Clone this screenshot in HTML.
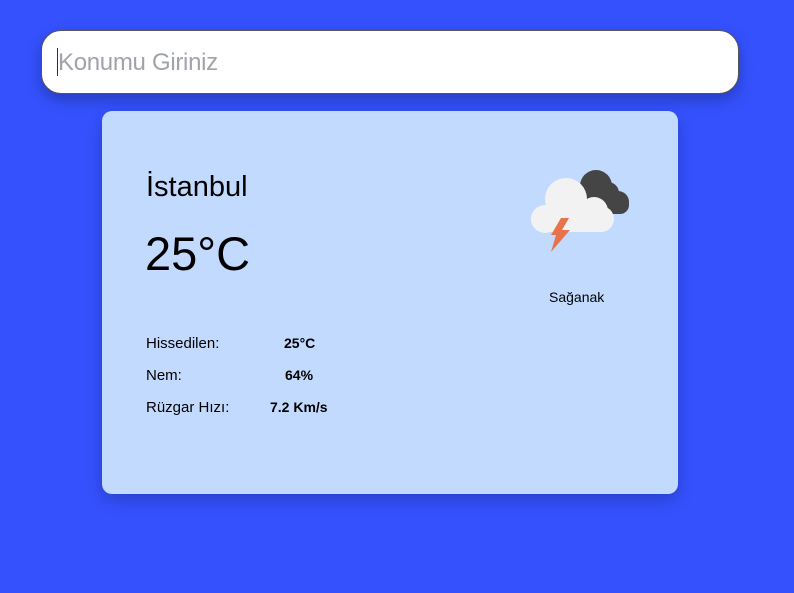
<!DOCTYPE html>
<html><head><style>
body{margin:0;width:794px;height:593px;background:#3451fd;font-family:"Liberation Sans","DejaVu Sans",sans-serif;position:relative;overflow:hidden}
.inp{position:absolute;left:41px;top:30px;width:696px;height:62px;background:#fff;border:1px solid #555;border-radius:20px;box-shadow:0 6px 14px rgba(0,0,0,.25)}
.inp span{position:absolute;left:16px;top:18px;font-size:24px;color:#a0a3aa;letter-spacing:-0.3px}
.inp i{position:absolute;left:15px;top:17px;width:1px;height:28px;background:#333}
.card{position:absolute;left:102px;top:111px;width:576px;height:383px;background:#c2dafd;border-radius:10px;box-shadow:0 6px 16px rgba(0,0,0,.2)}
.t{position:absolute;color:#000}
</style></head><body>
<div class="inp"><i></i><span>Konumu Giriniz</span></div>
<div class="card">
<div class="t" style="left:44px;top:60px;font-size:29px">İstanbul</div>
<div class="t" style="left:43px;top:115px;font-size:47px">25°C</div>
<div class="t" style="left:447px;top:178px;font-size:14px">Sağanak</div>
<div class="t" style="left:44px;top:224px;font-size:15px">Hissedilen:</div>
<div class="t" style="left:182px;top:224px;font-size:14px;font-weight:bold">25°C</div>
<div class="t" style="left:44px;top:256px;font-size:15px">Nem:</div>
<div class="t" style="left:183px;top:256px;font-size:14px;font-weight:bold">64%</div>
<div class="t" style="left:44px;top:288px;font-size:15px">Rüzgar Hızı:</div>
<div class="t" style="left:168px;top:288px;font-size:14px;font-weight:bold">7.2 Km/s</div>
</div>
<svg style="position:absolute;left:0;top:0" width="794" height="593">
<g fill="#454545">
<circle cx="596" cy="186" r="16"/><circle cx="608" cy="193" r="11"/><circle cx="618" cy="202" r="11"/>
<rect x="580" y="195" width="49" height="19" rx="9"/>
</g>
<g fill="#f2f2f2">
<circle cx="566" cy="199" r="21"/><circle cx="594" cy="211" r="14"/><circle cx="545" cy="219" r="14"/>
<rect x="531" y="206" width="83" height="26" rx="13"/>
</g>
<polygon fill="#e8734a" points="561,218 569,218 562,230 570,230 551,252 556,235 551,235" />
</svg>
</body></html>
